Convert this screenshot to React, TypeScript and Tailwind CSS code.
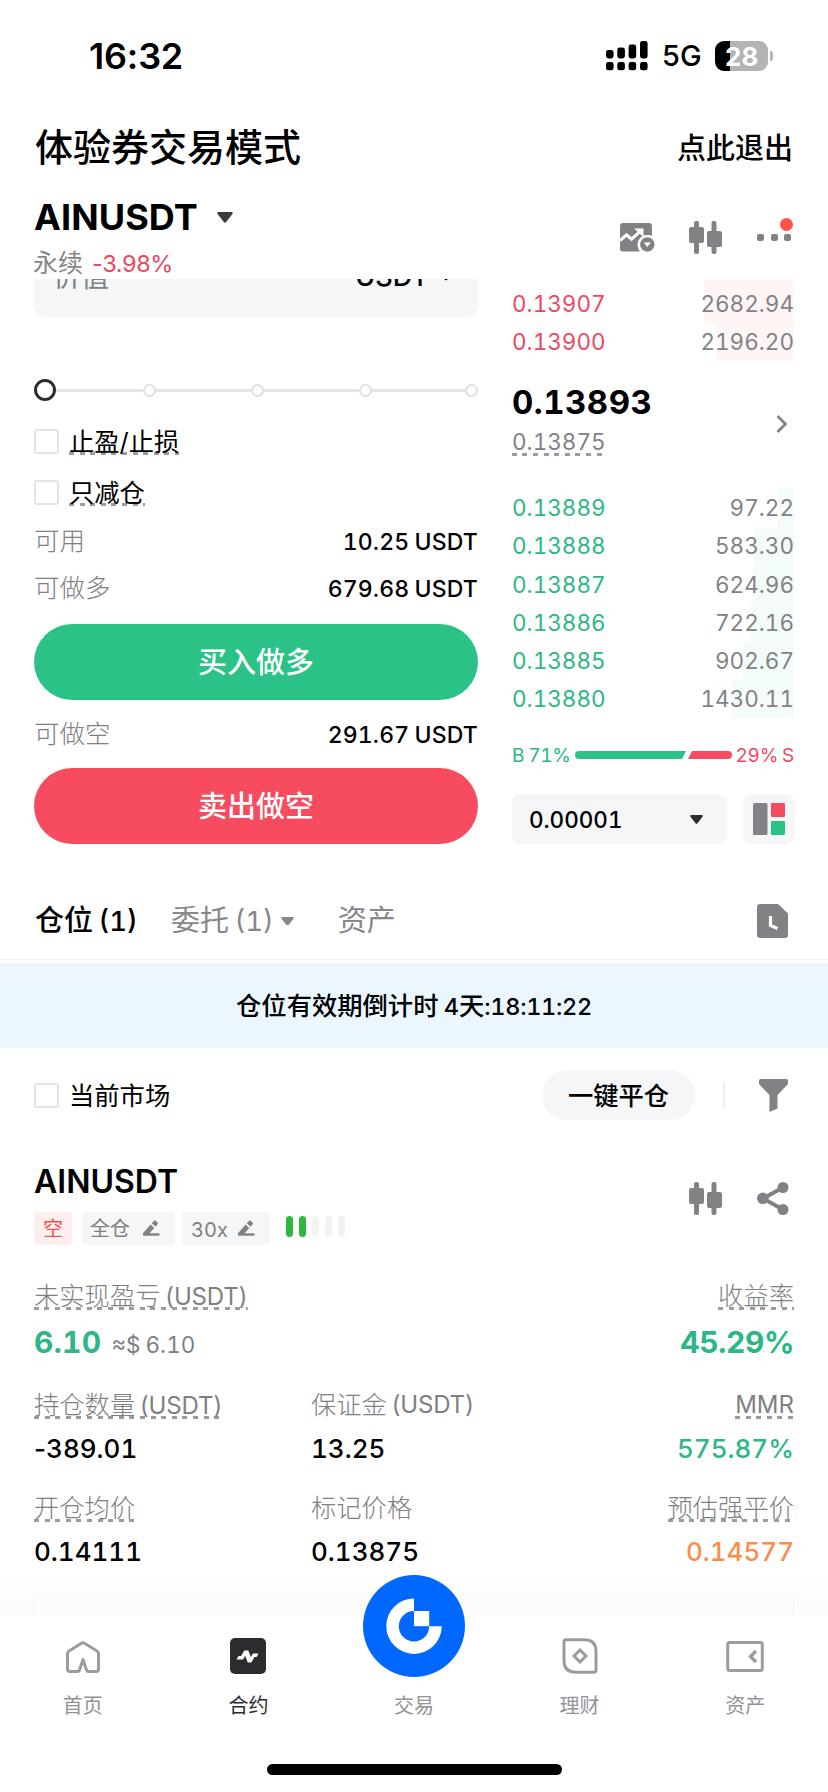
import type { ReactNode } from "react";

const dash =
  "inline-block h-[28px] leading-[28px] whitespace-nowrap bg-[repeating-linear-gradient(90deg,#9b9c9f_0_5px,transparent_5px_10.6px)] bg-[length:100%_3px] bg-bottom bg-no-repeat";

function Dashed({ children, className = "" }: { children: ReactNode; className?: string }) {
  return <span className={`${dash} ${className}`}>{children}</span>;
}

function Caret({ className, w = 16 }: { className: string; w?: number }) {
  return (
    <svg className={className} width={w} height={(w * 11) / 16} viewBox="0 0 16 11">
      <path d="M1.6 0h12.8c1.2 0 1.7 1.2 1 2L9.2 10c-.7.9-1.7.9-2.4 0L.6 2C-.1 1.2.4 0 1.6 0z" fill="currentColor" />
    </svg>
  );
}

function Candles() {
  return (
    <svg width="33" height="33" viewBox="0 0 33 33" fill="#808286">
      <rect x="5" y="0" width="5" height="33" rx="2" />
      <rect x="0" y="6" width="15" height="16" rx="2" />
      <rect x="22.5" y="0" width="5" height="33" rx="2" />
      <rect x="18" y="10" width="15" height="16" rx="2" />
    </svg>
  );
}

function Pencil() {
  return (
    <svg width="17" height="17" viewBox="0 0 17 17" fill="#808286">
      <path d="M0 13.2 7.6 4.6l3.6 3.3-4.6 5.3H15.6a.9.9 0 0 1 .9.9v.8a.9.9 0 0 1-.9.9H.8a.8.8 0 0 1-.8-.8z" />
      <path d="M8.8 3.2 10.9.9c.5-.6 1.2-.6 1.8-.1l1.8 1.7c.6.5.6 1.2.1 1.8l-2.1 2.4z" />
    </svg>
  );
}

function Checkbox() {
  return <span className="size-[25px] shrink-0 rounded-[3px] border-2 border-[#e3e4e6]" />;
}

function Signal() {
  const bars = [
    { x: 0, y: 9, h: 8.5 },
    { x: 11.3, y: 6.5, h: 11 },
    { x: 22.6, y: 3.5, h: 14 },
    { x: 34, y: 0, h: 17.5 },
  ];
  return (
    <svg className="-mt-[1px]" width="42" height="30" viewBox="0 0 42 30">
      {bars.map((b) => (
        <g key={b.x}>
          <rect x={b.x} y={b.y} width="7.6" height={b.h} rx="2.4" />
          <rect x={b.x} y="21" width="7.6" height="8.3" rx="2.4" />
        </g>
      ))}
    </svg>
  );
}

function StatusBar() {
  return (
    <div className="flex h-[112px] items-center justify-between pr-[55px] pl-[89px]">
      <span className="text-[36px] font-semibold tracking-[-0.2px] [font-variant-numeric:normal]">16:32</span>
      <div className="flex items-center">
        <Signal />
        <span className="ml-[14px] text-[29px] font-medium tracking-[-0.6px]">5G</span>
        <div className="ml-[14px] flex h-[30px] w-[53px] items-center justify-center rounded-[9px] bg-[linear-gradient(90deg,#000_0_15px,#b4b4b4_15px)] text-[26px] font-bold text-white">
          28
        </div>
        <span className="ml-[2px] h-[10px] w-[3px] rounded-r-full bg-[#b4b4b4]" />
      </div>
    </div>
  );
}

function Header() {
  return (
    <>
      <div className="flex h-[72px] items-center justify-between pr-[35px] pl-[35px]">
        <h1 className="pb-[1px] text-[38px] font-medium">体验券交易模式</h1>
        <span className="pt-[1px] text-[29px] font-medium">点此退出</span>
      </div>
      <div className="flex h-[95px] justify-between pr-[37px] pl-[34px]">
        <div>
          <div className="flex h-[66px] items-center">
            <span className="text-[36px] font-bold tracking-[0.1px]">AINUSDT</span>
            <Caret className="ml-[19px] text-[#3a3c40]" />
          </div>
          <div className="-ml-[1px] flex h-[28px] items-center">
            <span className="text-[25px] text-[#85878b]">永续</span>
            <span className="ml-[9px] text-[23.500px] tracking-[-0.4px] text-[#ec4863] [font-variant-numeric:normal]">-3.98%</span>
          </div>
        </div>
        <div className="flex h-[106px] items-center">
          <svg width="35" height="29" viewBox="0 0 35 29">
            <path d="M3 0h26a3 3 0 0 1 3 3v10a10 10 0 0 0-12 15.500H3a3 3 0 0 1-3-3V3a3 3 0 0 1 3-3z" fill="#808286" />
            <path d="M0 17.500 6.500 11.800 11.500 16.200 20 8.500" fill="none" stroke="#fff" strokeWidth="3" />
            <path d="M14 5.500h9.500v8.500l-3-2.500-3.500-3.500z" fill="#fff" />
            <circle cx="27.300" cy="21.500" r="9.500" fill="#fff" />
            <circle cx="27.300" cy="21.500" r="7.200" fill="#808286" />
            <path d="M23.700 19.500h7.200l-3.600 4.600z" fill="#fff" />
          </svg>
          <div className="ml-[34px]">
            <Candles />
          </div>
          <div className="relative ml-[35px] flex gap-[6.500px]">
            <span className="size-[7px] rounded-[2px] bg-[#808286]" />
            <span className="size-[7px] rounded-[2px] bg-[#808286]" />
            <span className="size-[7px] rounded-[2px] bg-[#808286]" />
            <span className="absolute -top-[16px] -right-[2px] size-[13px] rounded-full bg-[#ff5245]" />
          </div>
        </div>
      </div>
    </>
  );
}

function AmountRow({ label, value, className }: { label: string; value: string; className: string }) {
  return (
    <div className={`flex items-center justify-between pt-[1px] ${className}`}>
      <span className="text-[25.500px] font-light text-[#7e8084]">{label}</span>
      <span className="pt-[1px] text-[23px] font-medium tracking-[0.150px] [word-spacing:-1px]">{value}</span>
    </div>
  );
}

function OrderForm() {
  return (
    <div className="flex w-[444px] flex-col">
      <div className="flex h-[38px] items-end overflow-hidden rounded-b-[12px] bg-[#f4f6f8] pr-[25px] pb-[21px] pl-[19px]">
        <span className="text-[28px] leading-[38px] text-[#7e8084]">价值</span>
        <span className="ml-auto text-[27px] leading-[38px] font-medium">USDT</span>
        <Caret className="mb-[15px] ml-[10px]" w={14} />
      </div>
      <div className="mt-[62px] flex h-[22px] items-center">
        <span className="size-[22px] rounded-full border-3 border-[#2b2c30]" />
        <span className="h-[3px] w-[87px] bg-[#e3e4e6]" />
        <span className="size-[13px] rounded-full border-2 border-[#dfe0e2]" />
        <span className="h-[3px] w-[95px] bg-[#e3e4e6]" />
        <span className="size-[13px] rounded-full border-2 border-[#dfe0e2]" />
        <span className="h-[3px] w-[95px] bg-[#e3e4e6]" />
        <span className="size-[13px] rounded-full border-2 border-[#dfe0e2]" />
        <span className="h-[3px] flex-1 bg-[#e3e4e6]" />
        <span className="size-[13px] rounded-full border-2 border-[#dfe0e2]" />
      </div>
      <div className="mt-[15px] flex h-[50px] items-center gap-[10px]">
        <Checkbox />
        <Dashed className="text-[25.300px] leading-[29px]">止盈/止损</Dashed>
      </div>
      <div className="mt-[1px] flex h-[50px] items-center gap-[10px]">
        <Checkbox />
        <Dashed className="text-[25.300px] leading-[29px]">只减仓</Dashed>
      </div>
      <AmountRow label="可用" value="10.25 USDT" className="h-[48px]" />
      <AmountRow label="可做多" value="679.68 USDT" className="h-[46px]" />
      <button className="mt-[13px] h-[76px] rounded-[38px] bg-[#2bc287] pt-[1px] text-[29px] font-medium text-white">买入做多</button>
      <AmountRow label="可做空" value="291.67 USDT" className="h-[68px]" />
      <button className="h-[76px] rounded-[38px] bg-[#f74b60] pt-[2px] text-[29px] font-medium text-white">卖出做空</button>
    </div>
  );
}

const asks = [
  { price: "0.13907", size: "2682.94", depth: 90 },
  { price: "0.13900", size: "2196.20", depth: 78 },
];
const bids = [
  { price: "0.13889", size: "97.22", depth: 16 },
  { price: "0.13888", size: "583.30", depth: 39 },
  { price: "0.13887", size: "624.96", depth: 41 },
  { price: "0.13886", size: "722.16", depth: 44 },
  { price: "0.13885", size: "902.67", depth: 51 },
  { price: "0.13880", size: "1430.11", depth: 62 },
];

function OrderBook() {
  return (
    <div className="flex w-[282px] flex-col">
      {asks.map((a, i) => (
        <div key={a.price} className={`relative flex items-center justify-between text-[22.500px] ${i === 0 ? "h-[44px] pt-[6px]" : "h-[38px]"}`}>
          <span className="absolute inset-y-0 right-0 bg-[#fff5f4]" style={{ width: a.depth }} />
          <span className="relative text-[#ec4863]">{a.price}</span>
          <span className="relative text-[#808286]">{a.size}</span>
        </div>
      ))}
      <div className="mt-[18px] flex items-center justify-between">
        <div className="flex flex-col">
          <span className="h-[46px] text-[33px] leading-[46px] font-bold tracking-[0.500px]">0.13893</span>
          <span className="flex h-[34px] items-center text-[22.500px] text-[#808286]">
            <Dashed>0.13875</Dashed>
          </span>
        </div>
        <svg className="mt-[10px] mr-[6px]" width="13" height="18" viewBox="0 0 13 18">
          <path d="M2.500 1l8 8-8 8" fill="none" stroke="#808286" strokeWidth="2.800" />
        </svg>
      </div>
      <div className="mt-[30px]">
        {bids.map((b) => (
          <div key={b.price} className="relative flex h-[38.200px] items-center justify-between text-[22.500px]">
            <span className="absolute inset-y-0 right-0 bg-[#f4fcfa]" style={{ width: b.depth }} />
            <span className="relative text-[#2db686]">{b.price}</span>
            <span className="relative text-[#808286]">{b.size}</span>
          </div>
        ))}
      </div>
      <div className="mt-[22px] flex h-[30px] items-center text-[19px]">
        <span className="w-[63px] pt-[2px] whitespace-nowrap tracking-[-0.200px] text-[#2db686] [word-spacing:-1px]">B 71%</span>
        <svg width="157" height="8" viewBox="0 0 157 8">
          <path d="M4 0h107l-4 8H4a4 4 0 0 1 0-8z" fill="#2bc287" />
          <path d="M117 0h36a4 4 0 0 1 0 8h-40z" fill="#f74b60" />
        </svg>
        <span className="ml-auto pt-[2px] whitespace-nowrap tracking-[-0.200px] text-[#ec4863] [word-spacing:-1px]">29% S</span>
      </div>
      <div className="mt-[24px] flex h-[50px] justify-between">
        <div className="flex w-[215px] items-center justify-between rounded-[8px] bg-[#f4f6f8] pr-[24px] pl-[17px] text-[22.500px] font-medium">
          <span className="pt-[2px]">0.00001</span>
          <Caret className="text-[#2b2c30]" w={13} />
        </div>
        <div className="flex w-[51px] items-center justify-center rounded-[8px] bg-[#f4f6f8]">
          <svg width="32" height="32" viewBox="0 0 32 32">
            <rect width="14.500" height="32" rx="1.500" fill="#808286" />
            <rect x="18" width="14" height="14" rx="1" fill="#f74b60" />
            <rect x="18" y="18" width="14" height="14" rx="1" fill="#2bc287" />
          </svg>
        </div>
      </div>
    </div>
  );
}

function Positions() {
  return (
    <>
      <div className="mt-[38px] flex h-[78px] items-center border-b border-[#f1f3f5] pt-[1px] pr-[40px] pl-[35px] text-[29px] font-medium">
        <span className="w-[136px] whitespace-nowrap [word-spacing:-2px]">
          仓位<span className="text-[27.500px]"> (1)</span>
        </span>
        <span className="font-normal whitespace-nowrap text-[#85878b] [word-spacing:-2px]">
          委托<span className="text-[27.500px]"> (1)</span>
        </span>
        <Caret className="ml-[7px] text-[#85878b]" w={13} />
        <span className="ml-[44px] font-normal text-[#85878b]">资产</span>
        <svg className="ml-auto" width="31" height="34" viewBox="0 0 31 34">
          <path d="M3 0h18l10 9.500V31a3 3 0 0 1-3 3H3a3 3 0 0 1-3-3V3a3 3 0 0 1 3-3z" fill="#808286" />
          <path d="M13.500 12v9.500l7 3" fill="none" stroke="#fff" strokeWidth="3.200" />
        </svg>
      </div>
      <div className="mt-[3px] flex h-[85px] items-center justify-center bg-[#ebf6fe] pt-[1px] text-[25.300px] font-medium">
        <span className="whitespace-nowrap">
          仓位有效期倒计时<span className="text-[23.500px] [word-spacing:-1px]"> 4</span>天
          <span className="text-[23.500px] tracking-[-0.300px]">:18:11:22</span>
        </span>
      </div>
      <div className="flex h-[94px] items-center pr-[40px] pl-[34px]">
        <Checkbox />
        <span className="ml-[10px] pt-[1px] text-[25.300px]">当前市场</span>
        <button className="ml-auto h-[50px] w-[153px] rounded-full bg-[#f4f6f8] pt-[1px] text-[25.300px] font-medium">一键平仓</button>
        <span className="ml-[28px] h-[26px] w-[2px] bg-[#eff0f2]" />
        <svg className="ml-[34px]" width="29" height="33" viewBox="0 0 29 33">
          <path d="M1.500 0h26A1.500 1.500 0 0 1 29 1.500V5L18.500 16v13.500L10.500 33V16L0 5V1.500A1.500 1.500 0 0 1 1.500 0z" fill="#808286" />
        </svg>
      </div>
      <div className="mt-[16px] flex h-[87px] items-center justify-between pr-[39px] pl-[34px]">
        <div>
          <div className="flex h-[46px] items-center pt-[2px] text-[32px] font-semibold">AINUSDT</div>
          <div className="mt-[8px] flex h-[33px] text-[20px] text-[#7e8084]">
            <span className="flex w-[38px] items-center justify-center rounded-[3px] bg-[#feeeed] text-[#f0554d]">空</span>
            <span className="ml-[10px] flex w-[93px] items-center justify-between rounded-[3px] bg-[#f4f6f8] pr-[15px] pl-[8px]">
              全仓 <Pencil />
            </span>
            <span className="ml-[7px] flex w-[88px] items-center justify-between rounded-[3px] bg-[#f4f6f8] pr-[15px] pl-[9px]">
              <span className="pt-[2px]">30x</span> <Pencil />
            </span>
            <span className="ml-[16px] flex gap-[6px] pt-[4px]">
              <i className="h-[21px] w-[7px] rounded-full bg-[#2eb840]" />
              <i className="h-[21px] w-[7px] rounded-full bg-[#2eb840]" />
              <i className="h-[21px] w-[7px] rounded-full bg-[#f2f2f3]" />
              <i className="h-[21px] w-[7px] rounded-full bg-[#f2f2f3]" />
              <i className="h-[21px] w-[7px] rounded-full bg-[#f2f2f3]" />
            </span>
          </div>
        </div>
        <div className="flex items-center gap-[35px] pb-[7px]">
          <Candles />
          <svg width="32" height="33" viewBox="0 0 32 33">
            <path d="M26 5.500 6 16.500l20 11" fill="none" stroke="#808286" strokeWidth="4" />
            <circle cx="26" cy="5.500" r="5.500" fill="#808286" />
            <circle cx="5.800" cy="16.300" r="5.800" fill="#808286" />
            <circle cx="26" cy="27.500" r="5.500" fill="#808286" />
          </svg>
        </div>
      </div>
      <div className="mt-[33px] pr-[34px] pl-[34px]">
        <div className="flex h-[36px] items-center justify-between text-[25.300px] font-light text-[#7e8084]">
          <Dashed>
            未实现盈亏<span className="text-[24px] font-normal tracking-[-0.200px] [word-spacing:-2px]"> (USDT)</span>
          </Dashed>
          <Dashed>收益率</Dashed>
        </div>
        <div className="mt-[8px] flex h-[40px] items-center justify-between pt-[1px] text-[30px] font-bold text-[#2db686]">
          <span className="flex items-center">
            <span className="tracking-[0.300px]">6.10</span>
            <span className="ml-[10px] pt-[4px] text-[22.500px] font-normal text-[#7e8084] [word-spacing:-1px]">≈$ 6.10</span>
          </span>
          <span className="tracking-[-0.400px]">45.29%</span>
        </div>
        <div className="mt-[24px] grid grid-cols-[277px_1fr_auto] items-center text-[26px] font-medium">
          <span className="flex h-[36px] items-center pt-[1px] text-[25.300px] font-light text-[#7e8084]">
            <Dashed>
              持仓数量<span className="text-[24px] font-normal tracking-[-0.200px] [word-spacing:-2px]"> (USDT)</span>
            </Dashed>
          </span>
          <span className="flex h-[36px] items-center pt-[1px] text-[25.300px] font-light whitespace-pre text-[#7e8084]">
            保证金<span className="text-[24px] font-normal tracking-[-0.200px] [word-spacing:-2px]"> (USDT)</span>
          </span>
          <span className="flex h-[36px] items-center justify-end pt-[1px] text-[24px] font-normal text-[#7e8084]">
            <Dashed>MMR</Dashed>
          </span>
          <span className="mt-[8px] flex h-[36px] items-center">
            <span className="[font-variant-numeric:normal]">-</span>
            <span>389.01</span>
          </span>
          <span className="mt-[8px] flex h-[36px] items-center">13.25</span>
          <span className="mt-[8px] flex h-[36px] items-center justify-end text-[#2db686]">575.87%</span>
          <span className="mt-[23px] flex h-[36px] items-center pt-[1px] text-[25.300px] font-light text-[#7e8084]">
            <Dashed>开仓均价</Dashed>
          </span>
          <span className="mt-[23px] flex h-[36px] items-center pt-[1px] text-[25.300px] font-light text-[#7e8084]">标记价格</span>
          <span className="mt-[23px] flex h-[36px] items-center justify-end pt-[1px] text-[25.300px] font-light text-[#7e8084]">
            <Dashed>预估强平价</Dashed>
          </span>
          <span className="mt-[8px] flex h-[36px] items-center">0.14111</span>
          <span className="mt-[8px] flex h-[36px] items-center">0.13875</span>
          <span className="mt-[8px] flex h-[36px] items-center justify-end text-[#f98e4b]">0.14577</span>
        </div>
      </div>
      <div className="mt-[3px] h-[44px] bg-linear-to-b from-white to-[#fbfbfb] px-[34px] pt-[22px]">
        <div className="h-[22px] rounded-t-[4px] border-x border-t border-[#f6f6f7]" />
      </div>
    </>
  );
}

function NavItem({ label, icon, active = false }: { label: string; icon: ReactNode; active?: boolean }) {
  return (
    <div className={`flex flex-1 flex-col items-center text-[20px] ${active ? "text-[#2b2c30]" : "text-[#909296]"}`}>
      <div className="flex h-[80px] items-center justify-center">{icon}</div>
      <span className="h-[20px] leading-[20px]">{label}</span>
    </div>
  );
}

function BottomNav() {
  return (
    <div className="flex h-[176px] flex-col">
      <div className="flex h-[148px]">
        <NavItem
          label="首页"
          icon={
            <svg className="mt-[2px]" width="34" height="32" viewBox="0 0 34 32" fill="none" stroke="#9b9c9f" strokeWidth="3" strokeLinejoin="round">
              <path d="M1.500 12.500Q1.500 11 3 10L15.500 2.200Q17 1.200 18.500 2.200L31 10Q32.500 11 32.500 12.500V28Q32.500 30.500 30 30.500H22.500Q21 30.500 20.500 29L17 18.500 13.500 29Q13 30.500 11.500 30.500H4Q1.500 30.500 1.500 28z" />
            </svg>
          }
        />
        <NavItem
          active
          label="合约"
          icon={
            <svg width="36" height="36" viewBox="0 0 36 36">
              <rect width="36" height="36" rx="5" fill="#2b2c30" />
              <path d="M6.500 21.500 8.500 18h2.500l3.300-5.500h4l2.600 6.500 2-3.500h5.600l-1.900 3.600h-2.200l-3 5.400h-3.600l-2.700-6.700-2 3.700z" fill="#fff" />
            </svg>
          }
        />
        <NavItem
          label="交易"
          icon={
            <svg className="-mt-[60px]" width="102" height="102" viewBox="0 0 102 102">
              <circle cx="51" cy="51" r="51" fill="#0068ff" />
              <path d="M51 23.500a27.700 27.700 0 1 0 27.700 27.700H66.200A15.200 15.200 0 1 1 51 36z" fill="#fff" />
              <rect x="51" y="36" width="15.200" height="15.200" fill="#fff" />
            </svg>
          }
        />
        <NavItem
          label="理财"
          icon={
            <svg width="36" height="36" viewBox="0 0 36 36" fill="none" stroke="#9b9c9f" strokeWidth="3">
              <path d="M4 1.800H22Q34 1.800 34 13V32Q34 34.200 32 34.200H14Q2 34.200 2 23V4Q2 1.800 4 1.800z" />
              <path d="M18 12l6 6-6 6-6-6z" />
            </svg>
          }
        />
        <NavItem
          label="资产"
          icon={
            <svg width="38" height="31" viewBox="0 0 38 31" fill="none" stroke="#9b9c9f" strokeWidth="3">
              <rect x="1.700" y="1.500" width="34.600" height="28" rx="2" />
              <path d="M30 10l-5.500 5.500L30 21" strokeWidth="3.400" />
            </svg>
          }
        />
      </div>
      <div className="mx-auto h-[11px] w-[295px] rounded-full bg-black" />
    </div>
  );
}

export default function App() {
  return (
    <div className="h-[1792px] w-[828px] overflow-hidden bg-white font-['Inter','Noto_Sans_CJK_SC',sans-serif] text-black tabular-nums">
      <StatusBar />
      <Header />
      <div className="flex h-[565px] pl-[34px]">
        <OrderForm />
        <div className="ml-[34px]">
          <OrderBook />
        </div>
      </div>
      <Positions />
      <BottomNav />
    </div>
  );
}
